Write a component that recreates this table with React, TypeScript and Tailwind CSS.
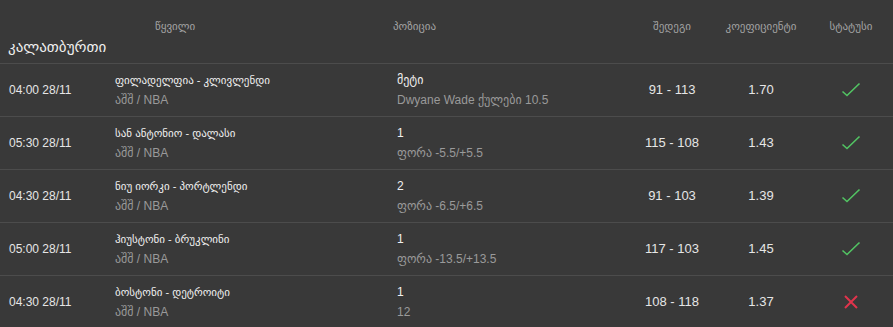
import React from "react";

type Row = {
  time: string;
  pair: string;
  league: string;
  pos: string;
  posSub: string;
  result: string;
  coef: string;
  win: boolean;
};

const rows: Row[] = [
  { time: "04:00 28/11", pair: "ფილადელფია - კლივლენდი", league: "აშშ / NBA", pos: "მეტი", posSub: "Dwyane Wade ქულები 10.5", result: "91 - 113", coef: "1.70", win: true },
  { time: "05:30 28/11", pair: "სან ანტონიო - დალასი", league: "აშშ / NBA", pos: "1", posSub: "ფორა -5.5/+5.5", result: "115 - 108", coef: "1.43", win: true },
  { time: "04:30 28/11", pair: "ნიუ იორკი - პორტლენდი", league: "აშშ / NBA", pos: "2", posSub: "ფორა -6.5/+6.5", result: "91 - 103", coef: "1.39", win: true },
  { time: "05:00 28/11", pair: "ჰიუსტონი - ბრუკლინი", league: "აშშ / NBA", pos: "1", posSub: "ფორა -13.5/+13.5", result: "117 - 103", coef: "1.45", win: true },
  { time: "04:30 28/11", pair: "ბოსტონი - დეტროიტი", league: "აშშ / NBA", pos: "1", posSub: "12", result: "108 - 118", coef: "1.37", win: false },
];

const Check = () => (
  <svg width="20" height="16" viewBox="0 0 20 16" fill="none">
    <path d="M1.5 9.5 L6 13.5 L18.5 1.5" stroke="#52c463" strokeWidth="1.6" />
  </svg>
);

const Cross = () => (
  <svg width="16" height="16" viewBox="0 0 16 16" fill="none">
    <path d="M2 2 L14 14 M14 2 L2 14" stroke="#e0344c" strokeWidth="2" />
  </svg>
);

const grid = "grid grid-cols-[115px_282px_229px_92px_86px_1fr]";

export default function App() {
  return (
    <div
      className="w-[893px] h-[327px] overflow-hidden bg-[#393939] text-[#e6e6e6]"
      style={{ fontFamily: '"Liberation Sans", "DejaVu Sans", Arial, sans-serif' }}
    >
      <div className={`${grid} pt-[19px] h-[33px] text-[11px] text-[#a3a3a3] leading-[14px]`}>
        <div />
        <div className="pl-[40px]">წყვილი</div>
        <div className="-ml-[4px]">პოზიცია</div>
        <div className="text-center">შედეგი</div>
        <div className="text-center">კოეფიციენტი</div>
        <div className="text-center pl-[5px]">სტატუსი</div>
      </div>
      <div className="h-[31px] pl-[8px] pt-[4px] text-[15px] leading-[20px] text-[#f0f0f0] border-b border-[#4c4c4c]">
        კალათბურთი
      </div>
      {rows.map((r, i) => (
        <div key={i} className={`${grid} h-[53px] items-center border-b border-[#4c4c4c] text-[12px] leading-[20px]`}>
          <div className="pl-[9px] text-[#e6e6e6]">{r.time}</div>
          <div className="flex flex-col">
            <span className="text-[11px] text-[#f0f0f0]">{r.pair}</span>
            <span className="text-[#9a9a9a]">{r.league}</span>
          </div>
          <div className="flex flex-col">
            <span className="text-[#f0f0f0]">{r.pos}</span>
            <span className="text-[#9a9a9a]">{r.posSub}</span>
          </div>
          <div className="text-center text-[13px]">{r.result}</div>
          <div className="text-center text-[13px]">{r.coef}</div>
          <div className="flex justify-center pl-[5px]">{r.win ? <Check /> : <Cross />}</div>
        </div>
      ))}
    </div>
  );
}
